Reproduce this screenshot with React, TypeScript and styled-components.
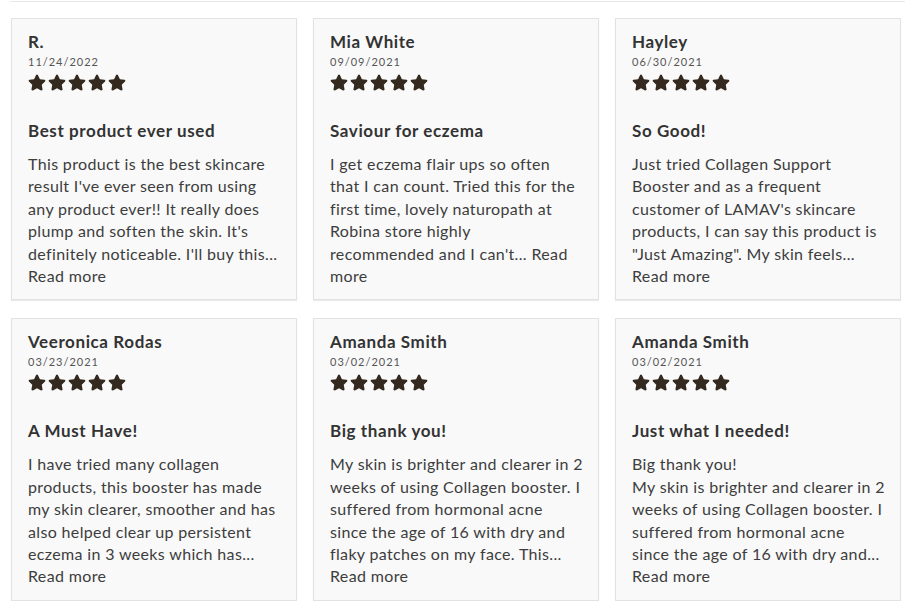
import React from "react";
import styled, { createGlobalStyle } from "styled-components";

const GlobalStyle = createGlobalStyle`
  html, body { margin: 0; padding: 0; background: #ffffff; }
  body { font-family: Lato, "Open Sans", "Liberation Sans", sans-serif; color: #333; }
`;

const Page = styled.div`
  width: 910px;
  padding-top: 1px;
`;

const Divider = styled.div`
  height: 1px;
  background: #e8e8e8;
  margin: 0 5px 0 10px;
`;

const Grid = styled.div`
  display: grid;
  grid-template-columns: repeat(3, 286px);
  column-gap: 16px;
  row-gap: 18px;
  padding: 16px 9px 0 11px;
`;

const Card = styled.div`
  box-sizing: border-box;
  background: #f9f9f9;
  border: 1px solid #e2e2e2;
  box-shadow: 0 1px 1px rgba(0, 0, 0, 0.08);
  padding: 12px 16px 12px 16px;
  display: flex;
  flex-direction: column;
`;

const Name = styled.div`
  font-size: 17px;
  line-height: 22px;
  font-weight: 700;
  letter-spacing: 0.6px;
  color: #333;
`;

const DateText = styled.div`
  margin-top: 2px;
  font-size: 11px;
  line-height: 14px;
  letter-spacing: 1px;
  color: #555;
`;

const Stars = styled.div`
  margin-top: 5px;
  display: flex;
  gap: 2px;
  height: 17px;
  color: #33291f;
`;

const Title = styled.div`
  margin-top: 29px;
  font-size: 17px;
  line-height: 22px;
  font-weight: 700;
  letter-spacing: 0.6px;
  color: #333;
`;

const Body = styled.div`
  margin-top: 11px;
  font-size: 16px;
  line-height: 22.4px;
  letter-spacing: 0.35px;
  color: #3d3d3d;
`;

const Line = styled.span`
  display: block;
  white-space: nowrap;
`;

const More = styled.span`
  color: #3d3d3d;
  cursor: pointer;
`;

const Star = () => (
  <svg width="18" height="17" viewBox="0 0 576 512" fill="currentColor" aria-hidden="true">
    <path d="M259.3 17.8L194 150.2 47.9 171.5c-26.2 3.8-36.7 36.1-17.7 54.6l105.7 103-25 145.5c-4.5 26.3 23.2 46 46.4 33.7L288 439.6l130.7 68.7c23.2 12.2 50.9-7.4 46.4-33.7l-25-145.5 105.7-103c19-18.5 8.5-50.8-17.7-54.6L382 150.2 316.7 17.8c-11.7-23.6-45.6-23.9-57.4 0z" />
  </svg>
);

type Review = {
  name: string;
  date: string;
  title: string;
  lines: string[];
  splitMore?: boolean;
};

const reviews: Review[] = [
  {
    name: "R.",
    date: "11/24/2022",
    title: "Best product ever used",
    lines: [
      "This product is the best skincare",
      "result I've ever seen from using",
      "any product ever!! It really does",
      "plump and soften the skin. It's",
      "definitely noticeable. I'll buy this...",
    ],
  },
  {
    name: "Mia White",
    date: "09/09/2021",
    title: "Saviour for eczema",
    lines: [
      "I get eczema flair ups so often",
      "that I can count. Tried this for the",
      "first time, lovely naturopath at",
      "Robina store highly",
      "recommended and I can't...",
    ],
    splitMore: true,
  },
  {
    name: "Hayley",
    date: "06/30/2021",
    title: "So Good!",
    lines: [
      "Just tried Collagen Support",
      "Booster and as a frequent",
      "customer of LAMAV's skincare",
      "products, I can say this product is",
      "\"Just Amazing\". My skin feels...",
    ],
  },
  {
    name: "Veeronica Rodas",
    date: "03/23/2021",
    title: "A Must Have!",
    lines: [
      "I have tried many collagen",
      "products, this booster has made",
      "my skin clearer, smoother and has",
      "also helped clear up persistent",
      "eczema in 3 weeks which has...",
    ],
  },
  {
    name: "Amanda Smith",
    date: "03/02/2021",
    title: "Big thank you!",
    lines: [
      "My skin is brighter and clearer in 2",
      "weeks of using Collagen booster. I",
      "suffered from hormonal acne",
      "since the age of 16 with dry and",
      "flaky patches on my face. This...",
    ],
  },
  {
    name: "Amanda Smith",
    date: "03/02/2021",
    title: "Just what I needed!",
    lines: [
      "Big thank you!",
      "My skin is brighter and clearer in 2",
      "weeks of using Collagen booster. I",
      "suffered from hormonal acne",
      "since the age of 16 with dry and...",
    ],
  },
];

const ReviewCard = ({ review }: { review: Review }) => {
  const last = review.lines.length - 1;
  return (
    <Card>
      <Name>{review.name}</Name>
      <DateText>{review.date}</DateText>
      <Stars>
        {[0, 1, 2, 3, 4].map((i) => (
          <Star key={i} />
        ))}
      </Stars>
      <Title>{review.title}</Title>
      <Body>
        {review.lines.map((l, i) =>
          i === last && review.splitMore ? (
            <Line key={i}>
              {l} <More>Read</More>
            </Line>
          ) : (
            <Line key={i}>{l}</Line>
          )
        )}
        <Line>
          <More>{review.splitMore ? "more" : "Read more"}</More>
        </Line>
      </Body>
    </Card>
  );
};

export default function App() {
  return (
    <>
      <GlobalStyle />
      <Page>
        <Divider />
        <Grid>
          {reviews.map((r, i) => (
            <ReviewCard key={i} review={r} />
          ))}
        </Grid>
      </Page>
    </>
  );
}
